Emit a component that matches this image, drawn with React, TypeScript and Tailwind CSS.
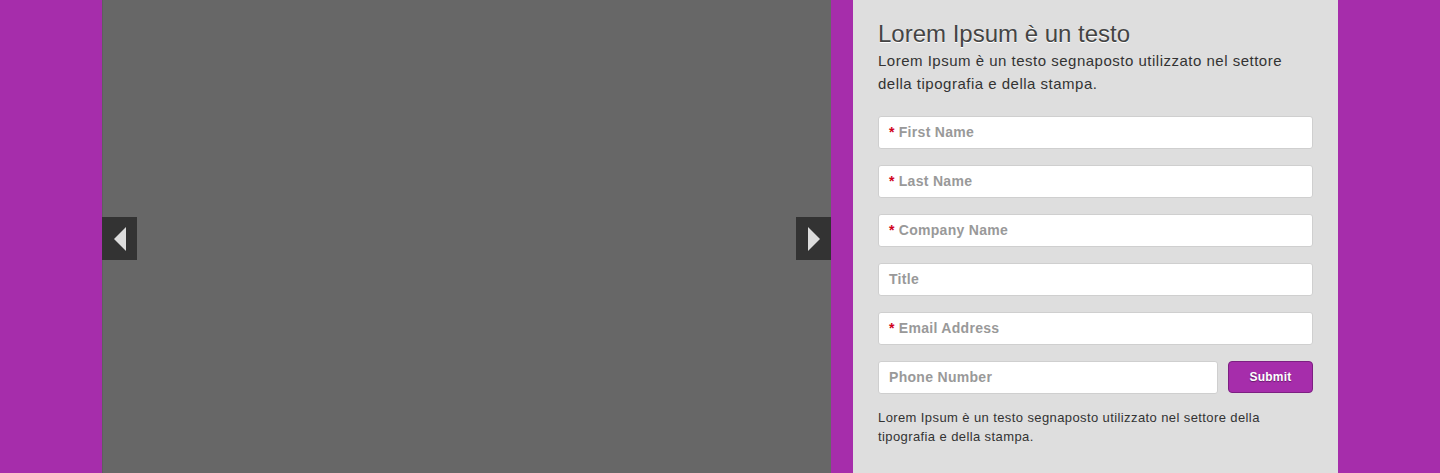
import React from "react";

function Field({ label, required }: { label: string; required?: boolean }) {
  return (
    <div className="h-[33px] w-full bg-white border border-[#cfcfcf] rounded-[3px] flex items-center pl-[10px] text-[14px] font-bold text-[#999999] tracking-[0.3px]">
      {required && <span className="text-[#d0021b] mr-[4px]">*</span>}
      <span>{label}</span>
    </div>
  );
}

export default function App() {
  return (
    <div
      className="w-[1440px] h-[473px] bg-[#a62dab] flex justify-center overflow-hidden"
      style={{ fontFamily: '"Liberation Sans", Arial, sans-serif' }}
    >
      <div className="w-[1236px] h-full flex">
        <div className="w-[729px] h-full bg-[#676767] relative border-l border-[#5f5f5f]">
          <div className="absolute left-[-1px] top-[217px] w-[35px] h-[43px] bg-[#333333] flex items-center justify-center">
            <svg width="12" height="24" viewBox="0 0 12 24">
              <polygon points="12,0 12,24 0,12" fill="#dddddd" />
            </svg>
          </div>
          <div className="absolute right-0 top-[217px] w-[35px] h-[43px] bg-[#333333] flex items-center justify-center">
            <svg width="12" height="24" viewBox="0 0 12 24">
              <polygon points="0,0 0,24 12,12" fill="#dddddd" />
            </svg>
          </div>
        </div>
        <div className="w-[22px]" />
        <div className="w-[485px] h-full bg-[#dedede] px-[25px] pt-[19px]">
          <h2
            className="text-[24px] leading-[30px] text-[#444444]"
            style={{ textShadow: "0 1px 0 #ffffff" }}
          >
            Lorem Ipsum è un testo
          </h2>
          <p className="mt-[0px] text-[15px] leading-[23px] text-[#333333] tracking-[0.5px]">
            Lorem Ipsum è un testo segnaposto utilizzato nel settore della tipografia e della stampa.
          </p>
          <div className="mt-[21px] flex flex-col gap-[16px]">
            <Field label="First Name" required />
            <Field label="Last Name" required />
            <Field label="Company Name" required />
            <Field label="Title" />
            <Field label="Email Address" required />
            <div className="flex gap-[10px] items-center">
              <div className="w-[340px]">
                <Field label="Phone Number" />
              </div>
              <button
                className="w-[85px] h-[32px] -mt-[1px] bg-[#a62dab] border border-[#7d1f82] rounded-[4px] text-white text-[12px] font-bold tracking-[0.2px]"
                style={{ textShadow: "0 1px 1px rgba(0,0,0,0.4)" }}
              >
                Submit
              </button>
            </div>
          </div>
          <p className="mt-[14px] text-[13px] leading-[19px] text-[#333333] tracking-[0.4px]">
            Lorem Ipsum è un testo segnaposto utilizzato nel settore della tipografia e della stampa.
          </p>
        </div>
      </div>
    </div>
  );
}
